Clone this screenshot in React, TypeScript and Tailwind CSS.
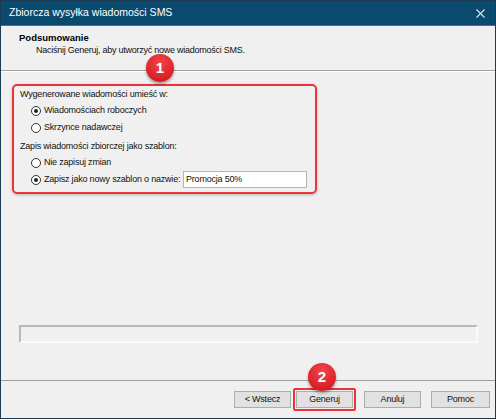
import React from 'react';

const font = { fontFamily: "'Liberation Sans', Arial, sans-serif" };

const Radio: React.FC<{ checked?: boolean; label: string }> = ({ checked, label }) => (
  <div className="flex items-center h-[17px] shrink-0">
    <span className="w-[10px] h-[10px] shrink-0 rounded-full border border-[#333] bg-white flex items-center justify-center">
      {checked && <span className="w-[4px] h-[4px] rounded-full bg-[#222]" />}
    </span>
    <span className="ml-[3px] text-[9px] tracking-[-0.2px] text-[#111] whitespace-nowrap">{label}</span>
  </div>
);

const Badge: React.FC<{ n: number; className: string }> = ({ n, className }) => (
  <div
    className={`absolute w-[28px] h-[28px] rounded-full flex items-center justify-center text-white font-bold text-[15px] shadow-[0_2px_3px_rgba(0,0,0,0.35)] bg-[radial-gradient(circle_at_50%_30%,#f0474b_0%,#d81f26_70%,#c0161c_100%)] ${className}`}
  >
    {n}
  </div>
);

const Button: React.FC<{ label: string; className?: string }> = ({ label, className = '' }) => (
  <div
    className={`h-[17px] w-[57px] flex items-center justify-center text-[9px] tracking-[-0.2px] text-[#111] bg-[#e1e1e1] border border-[#adadad] ${className}`}
  >
    {label}
  </div>
);

export default function App() {
  return (
    <div className="w-[496px] h-[420px] bg-white" style={font}>
      <div className="relative w-[496px] h-[419px] flex flex-col border border-[#1c3b52] bg-[#f0f0f0]">
        {/* Title bar */}
        <div className="h-[25px] bg-[#0b4a6f] flex items-center justify-between pl-[8px] pr-[10px] border-b border-[#3f7396]">
          <span className="text-white text-[10.5px]">Zbiorcza wysyłka wiadomości SMS</span>
          <svg width="9" height="9" viewBox="0 0 9 9">
            <path d="M0.5 0.5 L8.5 8.5 M8.5 0.5 L0.5 8.5" stroke="#dfe8ef" strokeWidth="1.1" />
          </svg>
        </div>

        {/* Header */}
        <div className="h-[45px] flex flex-col pl-[18px] pt-[6px] border-b border-[#a0a0a0]">
          <span className="font-bold text-[9.5px] text-black leading-[12px]">Podsumowanie</span>
          <span className="ml-[17px] text-[9px] tracking-[-0.25px] text-[#111] leading-[13px]">Naciśnij Generuj, aby utworzyć nowe wiadomości SMS.</span>
        </div>
        <div className="h-px bg-white" />

        {/* Content */}
        <div className="flex-1 flex flex-col pl-[11px] pr-[16px] pt-[12px]">
          <div className="w-[305px] h-[110px] border-2 border-[#e8343a] rounded-[5px] shadow-[0_1px_3px_rgba(0,0,0,0.25)] pl-[6px] pr-[8px] pt-[2px]">
            <div className="text-[9px] tracking-[-0.2px] text-[#111] h-[14px] flex items-center">Wygenerowane wiadomości umieść w:</div>
            <div className="pl-[11px]">
              <Radio checked label="Wiadomościach roboczych" />
              <Radio label="Skrzynce nadawczej" />
            </div>
            <div className="text-[9px] tracking-[-0.2px] text-[#111] h-[14px] mt-[4px] flex items-center">Zapis wiadomości zbiorczej jako szablon:</div>
            <div className="pl-[11px]">
              <Radio label="Nie zapisuj zmian" />
              <div className="flex items-center justify-between">
                <Radio checked label="Zapisz jako nowy szablon o nazwie:" />
                <div className="w-[124px] h-[17px] shrink-0 bg-white border border-[#b5b5b5] flex items-center pl-[2px] text-[9px] tracking-[-0.2px] text-[#111]">
                  Promocja 50%
                </div>
              </div>
            </div>
          </div>

          <div className="flex-1" />
          <div className="ml-[7px] mr-[1px] h-[18px] border-t-2 border-l-2 border-t-[#b9b9b9] border-l-[#b9b9b9] border-b-2 border-r-2 border-b-[#fafafa] border-r-[#fafafa] mb-[37px]" />
        </div>

        {/* Footer */}
        <div className="h-px bg-[#a0a0a0]" />
        <div className="h-[37px] flex items-start pt-[10px] pl-[233px]">
          <Button label="< Wstecz" />
          <div className="ml-[2px] p-[1px] border-2 border-[#e8343a] rounded-[2px] -mt-[3px]">
            <Button label="Generuj" className="w-[53px]" />
          </div>
          <Button label="Anuluj" className="ml-[8px]" />
          <Button label="Pomoc" className="ml-[10px] w-[59px]" />
        </div>

        <Badge n={1} className="left-[145px] top-[53px]" />
        <Badge n={2} className="left-[307px] top-[362px]" />
      </div>
    </div>
  );
}
